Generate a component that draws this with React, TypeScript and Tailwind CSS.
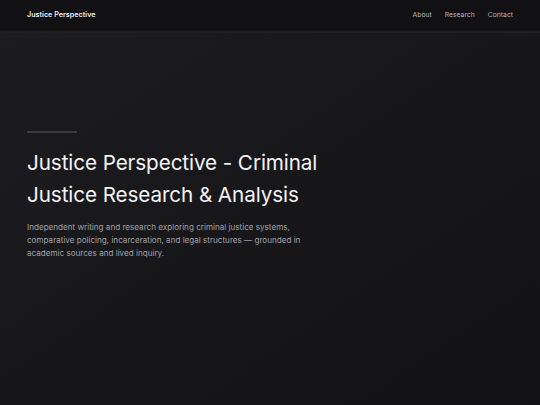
export default function App() {
  return (
    <div
      className="flex min-h-[405px] flex-col bg-[#141417] text-white"
      style={{ fontFamily: "Inter, 'Noto Sans', sans-serif" }}
    >
      <header className="flex h-[31px] items-center justify-between bg-[#111114] px-[27px]">
        <span className="text-[7.2px] font-semibold text-[#ececf0]">Justice Perspective</span>
        <nav className="flex items-center gap-[13px] text-[6.8px] text-[#b4b4bc]">
          <a>About</a>
          <a>Research</a>
          <a>Contact</a>
        </nav>
      </header>
      <div className="h-[2px] bg-[#202024]" />

      <main className="flex h-[372px] flex-col bg-gradient-to-br from-[#1d1d21] via-[#17171a] to-[#121215] px-[27px] pt-[98px]">
        <div className="h-[2px] w-[50px] bg-[#3a3a40]" />
        <h1 className="mt-[14px] text-[20.7px] font-normal leading-[32px] tracking-[-0.1px] text-[#f2f2f5]">
          Justice Perspective - Criminal
          <br />
          Justice Research &amp; Analysis
        </h1>
        <p className="mt-[10px] w-[290px] text-[8.1px] leading-[13px] text-[#a0a0a8]">
          Independent writing and research exploring criminal justice systems, comparative policing, incarceration, and legal structures — grounded in academic sources and lived inquiry.
        </p>
      </main>
    </div>
  );
}
